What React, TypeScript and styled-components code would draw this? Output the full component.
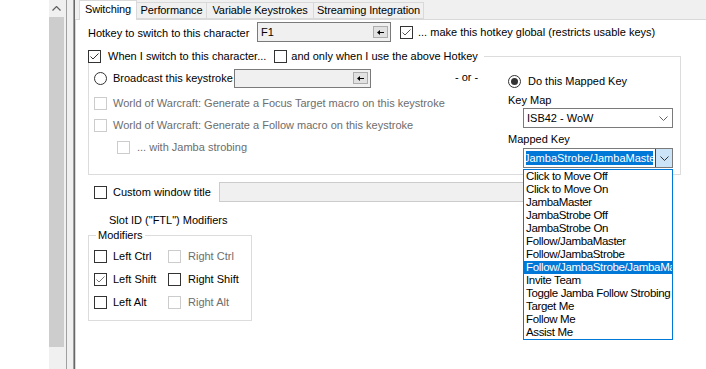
import React from "react";
import styled, { createGlobalStyle } from "styled-components";

const Global = createGlobalStyle`
  html, body { margin: 0; padding: 0; background: #ffffff; }
  body {
    font-family: "Liberation Sans", Arial, sans-serif;
    font-size: 11px;
    line-height: 13px;
    color: #000000;
  }
  * { box-sizing: border-box; }
`;

const Page = styled.div`
  position: relative;
  width: 706px;
  height: 369px;
  display: flex;
  overflow: hidden;
  background: #ffffff;
`;

const Gutter = styled.div`
  width: 49px;
  flex: none;
  background: #ffffff;
`;

const ScrollBar = styled.div`
  width: 17px;
  flex: none;
  background: #f0f0f0;
  display: flex;
  flex-direction: column;
`;

const ScrollArrow = styled.div`
  height: 17px;
  display: flex;
  align-items: center;
  justify-content: center;
  padding-right: 2px;
`;

const ScrollThumb = styled.div`
  width: 15px;
  height: 330px;
  background: #cdcdcd;
`;

const Splitter = styled.div`
  width: 9px;
  flex: none;
  background: #f0f0f0;
  border-left: 1px solid #a0a0a0;
  border-right: 1px solid #696969;
  box-shadow: inset -1px 0 0 #a0a0a0;
`;

const TabControl = styled.div`
  flex: 1;
  display: flex;
  flex-direction: column;
  background: #f0f0f0;
`;

const TabStrip = styled.div`
  height: 19px;
  flex: none;
  display: flex;
  align-items: flex-start;
  padding-left: 4px;
  position: relative;
  z-index: 1;
`;

const Tab = styled.div<{ $active?: boolean; $width: number }>`
  display: flex;
  align-items: center;
  justify-content: center;
  flex: none;
  width: ${(p) => p.$width}px;
  padding-bottom: ${(p) => (p.$active ? 2 : 0)}px;
  margin: ${(p) => (p.$active ? "0 0 0 0" : "2px 0 0 -1px")};
  height: ${(p) => (p.$active ? "20px" : "17px")};
  background: ${(p) => (p.$active ? "#ffffff" : "#f0f0f0")};
  border: 1px solid #d9d9d9;
  border-bottom: ${(p) => (p.$active ? "none" : "1px solid #d9d9d9")};
  white-space: nowrap;
  letter-spacing: -0.1px;
`;

const TabPage = styled.div`
  flex: 1;
  background: #ffffff;
  border-top: 1px solid #d9d9d9;
  border-left: 1px solid #d9d9d9;
  padding: 0 0 0 12px;
  display: flex;
  flex-direction: column;
`;

const Row = styled.div<{ $top?: number; $height?: number; $indent?: number }>`
  display: flex;
  align-items: center;
  margin-top: ${(p) => p.$top ?? 0}px;
  height: ${(p) => p.$height ?? 13}px;
  padding-left: ${(p) => p.$indent ?? 0}px;
  flex: none;
  white-space: nowrap;
`;

const Label = styled.span<{ $width?: number; $disabled?: boolean; $drop?: number }>`
  flex: none;
  width: ${(p) => (p.$width ? `${p.$width}px` : "auto")};
  padding-top: ${(p) => p.$drop ?? 0}px;
  color: ${(p) => (p.$disabled ? "#6d6d6d" : "#000000")};
  white-space: nowrap;
`;

const Input = styled.div<{ $width: number; $height?: number; $disabled?: boolean }>`
  flex: none;
  width: ${(p) => p.$width}px;
  height: ${(p) => p.$height ?? 20}px;
  border: 1px solid ${(p) => (p.$disabled ? "#cccccc" : "#7a7a7a")};
  background: #f0f0f0;
  display: flex;
  align-items: center;
  padding: 0 2px 0 3px;
`;

const InputText = styled.span`
  flex: 1;
  overflow: hidden;
  white-space: nowrap;
`;

const MiniButton = styled.span`
  flex: none;
  width: 15px;
  height: 12px;
  border: 1px solid #adadad;
  background: #e1e1e1;
  display: flex;
  align-items: center;
  justify-content: center;
`;

const Box = styled.span<{ $disabled?: boolean }>`
  flex: none;
  width: 13px;
  height: 13px;
  border: 1px solid ${(p) => (p.$disabled ? "#cccccc" : "#333333")};
  background: #ffffff;
  display: inline-flex;
  align-items: center;
  justify-content: center;
`;

const Radio = styled.span<{ $checked?: boolean }>`
  flex: none;
  width: 13px;
  height: 13px;
  border: 1px solid #333333;
  border-radius: 50%;
  background: #ffffff;
  display: inline-flex;
  align-items: center;
  justify-content: center;
  &::after {
    content: "";
    display: ${(p) => (p.$checked ? "block" : "none")};
    width: 7px;
    height: 7px;
    border-radius: 50%;
    background: #333333;
  }
`;

const Item = styled.label<{ $gap?: number; $width?: number }>`
  display: flex;
  align-items: center;
  gap: ${(p) => p.$gap ?? 6}px;
  flex: none;
  width: ${(p) => (p.$width ? `${p.$width}px` : "auto")};
  white-space: nowrap;
`;

const Group = styled.fieldset<{ $width: number; $height: number; $top: number }>`
  flex: none;
  margin: ${(p) => p.$top}px 0 0 0;
  padding: 0;
  width: ${(p) => p.$width}px;
  height: ${(p) => p.$height}px;
  border: 1px solid #dcdcdc;
  min-inline-size: 0;
`;

const Legend = styled.legend<{ $offset?: number }>`
  padding: 0 ${(p) => (p.$offset ? 2 : 6)}px 0 ${(p) => (p.$offset ? 2 : 0)}px;
  margin-left: ${(p) => p.$offset ?? -1}px;
  display: flex;
  align-items: center;
  height: 13px;
  white-space: nowrap;
  background: #ffffff;
`;

const GroupBody = styled.div`
  display: flex;
  padding-left: 5px;
`;

const LeftCol = styled.div`
  width: 361px;
  flex: none;
  display: flex;
  flex-direction: column;
  padding-top: 5px;
`;

const OrCol = styled.div`
  width: 53px;
  flex: none;
  padding-top: 8px;
`;

const RightCol = styled.div`
  flex: 1;
  display: flex;
  flex-direction: column;
  padding-top: 11px;
`;

const Select = styled.div<{ $top: number }>`
  margin: ${(p) => p.$top}px 0 0 15px;
  width: 150px;
  height: 20px;
  border: 1px solid #7a7a7a;
  background: #ffffff;
  display: flex;
  align-items: center;
  padding: 0 4px 0 3px;
  justify-content: space-between;
`;

const Combo = styled.div<{ $top: number }>`
  margin: ${(p) => p.$top}px 0 0 15px;
  width: 150px;
  height: 20px;
  border: 1px solid #7a7a7a;
  background: #ffffff;
  display: flex;
  align-items: stretch;
`;

const ComboEdit = styled.div`
  flex: 1;
  padding: 2px;
  display: flex;
  overflow: hidden;
`;

const ComboSelection = styled.span`
  flex: 1;
  background: #0078d7;
  color: #ffffff;
  overflow: hidden;
  white-space: nowrap;
  line-height: 14px;
  text-indent: -2px;
`;

const ComboButton = styled.span`
  flex: none;
  width: 17px;
  background: #cce4f7;
  border-left: 1px solid #005499;
  display: flex;
  align-items: center;
  justify-content: center;
`;

const ModBody = styled.div`
  display: grid;
  grid-template-columns: 74px 1fr;
  grid-auto-rows: 23px;
  align-items: center;
  padding: 3px 0 0 5px;
`;

const DropList = styled.ul`
  position: absolute;
  left: 523px;
  top: 169px;
  width: 150px;
  margin: 0;
  padding: 0;
  list-style: none;
  border: 1px solid #0078d7;
  background: #ffffff;
  z-index: 5;
  font-size: 11.5px;
  letter-spacing: -0.35px;
`;

const DropItem = styled.li<{ $selected?: boolean }>`
  height: 13px;
  line-height: 13px;
  padding-left: 2px;
  white-space: nowrap;
  overflow: hidden;
  background: ${(p) => (p.$selected ? "#0078d7" : "transparent")};
  color: ${(p) => (p.$selected ? "#ffffff" : "#000000")};
`;

function Check({ checked, disabled, tone }: { checked?: boolean; disabled?: boolean; tone?: string }) {
  return (
    <Box $disabled={disabled}>
      {checked && (
        <svg width="11" height="11" viewBox="0 0 11 11">
          <path d="M1.5 5.5 L4 8 L9.5 2.5" stroke={tone ?? "#333333"} strokeWidth="1" fill="none" />
        </svg>
      )}
    </Box>
  );
}

function Chevron({ color = "#606060" }: { color?: string }) {
  return (
    <svg width="9" height="5" viewBox="0 0 9 5">
      <path d="M0.5 0.5 L4.5 4.5 L8.5 0.5" stroke={color} strokeWidth="1" fill="none" />
    </svg>
  );
}

function BackIcon() {
  return (
    <svg width="7" height="5" viewBox="0 0 7 5">
      <path d="M0 2.5 L3 0 L3 5 Z" fill="#000000" />
      <path d="M3 2.5 H7" stroke="#000000" strokeWidth="1" />
    </svg>
  );
}

const tabs = [
  { name: "Switching", width: 58, active: true },
  { name: "Performance", width: 71 },
  { name: "Variable Keystrokes", width: 108 },
  { name: "Streaming Integration", width: 111 },
];

const mappedKeys = [
  "Click to Move Off",
  "Click to Move On",
  "JambaMaster",
  "JambaStrobe Off",
  "JambaStrobe On",
  "Follow/JambaMaster",
  "Follow/JambaStrobe",
  "Follow/JambaStrobe/JambaMaster",
  "Invite Team",
  "Toggle Jamba Follow Strobing",
  "Target Me",
  "Follow Me",
  "Assist Me",
];

export default function App() {
  return (
    <>
      <Global />
      <Page>
        <Gutter />
        <ScrollBar>
          <ScrollArrow>
            <svg width="9" height="5" viewBox="0 0 9 5">
              <path d="M0.5 4.5 L4.5 0.5 L8.5 4.5" stroke="#606060" strokeWidth="1.2" fill="none" />
            </svg>
          </ScrollArrow>
          <ScrollThumb />
        </ScrollBar>
        <Splitter />
        <TabControl>
          <TabStrip>
            {tabs.map((t) => (
              <Tab key={t.name} $active={t.active} $width={t.width}>
                {t.name}
              </Tab>
            ))}
          </TabStrip>
          <TabPage>
            <Row $top={2} $height={20}>
              <Label $width={169} $drop={3}>
                Hotkey to switch to this character
              </Label>
              <Input $width={134}>
                <InputText>F1</InputText>
                <MiniButton>
                  <BackIcon />
                </MiniButton>
              </Input>
              <Item $gap={5} style={{ marginLeft: 9 }}>
                <Check checked tone="#555555" />
                <Label>... make this hotkey global (restricts usable keys)</Label>
              </Item>
            </Row>

            <Group $top={8} $width={593} $height={125}>
              <Legend>
                <Item $gap={7}>
                  <Check checked />
                  <Label>When I switch to this character...</Label>
                </Item>
                <Item $gap={4} style={{ marginLeft: 8 }}>
                  <Check />
                  <Label>and only when I use the above Hotkey</Label>
                </Item>
              </Legend>
              <GroupBody>
                <LeftCol>
                  <Row $height={20}>
                    <Item $gap={6} $width={140}>
                      <Radio />
                      <Label>Broadcast this keystroke</Label>
                    </Item>
                    <Input $width={137} $height={19}>
                      <InputText />
                      <MiniButton>
                        <BackIcon />
                      </MiniButton>
                    </Input>
                  </Row>
                  <Row $top={4} $height={22}>
                    <Item $gap={6}>
                      <Check disabled />
                      <Label $disabled>World of Warcraft: Generate a Focus Target macro on this keystroke</Label>
                    </Item>
                  </Row>
                  <Row $height={22}>
                    <Item $gap={6}>
                      <Check disabled />
                      <Label $disabled>World of Warcraft: Generate a Follow macro on this keystroke</Label>
                    </Item>
                  </Row>
                  <Row $height={22} $indent={23}>
                    <Item $gap={7}>
                      <Check disabled />
                      <Label $disabled>... with Jamba strobing</Label>
                    </Item>
                  </Row>
                </LeftCol>
                <OrCol>
                  <Label>- or -</Label>
                </OrCol>
                <RightCol>
                  <Row $height={14}>
                    <Item $gap={7}>
                      <Radio $checked />
                      <Label>Do this Mapped Key</Label>
                    </Item>
                  </Row>
                  <Row $top={5} $height={14}>
                    <Label>Key Map</Label>
                  </Row>
                  <Select $top={1}>
                    <span>ISB42 - WoW</span>
                    <Chevron />
                  </Select>
                  <Row $top={4} $height={14}>
                    <Label>Mapped Key</Label>
                  </Row>
                  <Combo $top={2}>
                    <ComboEdit>
                      <ComboSelection>JambaStrobe/JambaMaster</ComboSelection>
                    </ComboEdit>
                    <ComboButton>
                      <Chevron color="#333333" />
                    </ComboButton>
                  </Combo>
                </RightCol>
              </GroupBody>
            </Group>

            <Row $top={7} $height={20} $indent={6}>
              <Item $gap={6} $width={125}>
                <Check />
                <Label>Custom window title</Label>
              </Item>
              <Input $width={430} $disabled />
            </Row>

            <Row $top={12} $height={13} $indent={21}>
              <Label>Slot ID ("FTL") Modifiers</Label>
            </Row>

            <Group $top={2} $width={164} $height={92}>
              <Legend $offset={7}>Modifiers</Legend>
              <ModBody>
                <Item $gap={6}>
                  <Check />
                  <Label>Left Ctrl</Label>
                </Item>
                <Item $gap={7}>
                  <Check disabled />
                  <Label $disabled>Right Ctrl</Label>
                </Item>
                <Item $gap={6}>
                  <Check checked tone="#777777" />
                  <Label>Left Shift</Label>
                </Item>
                <Item $gap={7}>
                  <Check />
                  <Label>Right Shift</Label>
                </Item>
                <Item $gap={6}>
                  <Check />
                  <Label>Left Alt</Label>
                </Item>
                <Item $gap={7}>
                  <Check disabled />
                  <Label $disabled>Right Alt</Label>
                </Item>
              </ModBody>
            </Group>
          </TabPage>
        </TabControl>
        <DropList>
          {mappedKeys.map((k) => (
            <DropItem key={k} $selected={k === "Follow/JambaStrobe/JambaMaster"}>
              {k}
            </DropItem>
          ))}
        </DropList>
      </Page>
    </>
  );
}
